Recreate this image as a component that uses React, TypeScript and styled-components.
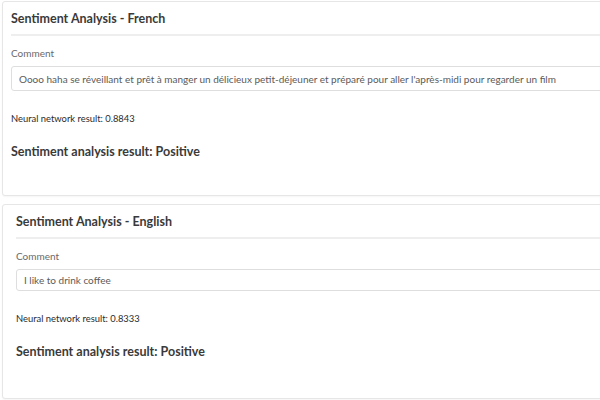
import React from "react";
import styled, { createGlobalStyle } from "styled-components";

const GlobalStyle = createGlobalStyle`
  html, body {
    margin: 0;
    padding: 0;
    background: #ffffff;
    overflow: hidden;
  }
  body {
    font-family: Lato, "Open Sans", "Liberation Sans", sans-serif;
    color: #333333;
  }
`;

type Analysis = {
  language: string;
  comment: string;
  score: string;
  result: string;
  inset: number;
  inputHeight: number;
};

const analyses: Analysis[] = [
  {
    language: "French",
    comment:
      "Oooo haha se réveillant et prêt à manger un délicieux petit-déjeuner et préparé pour aller l'après-midi pour regarder un film",
    score: "0.8843",
    result: "Positive",
    inset: 8,
    inputHeight: 25,
  },
  {
    language: "English",
    comment: "I like to drink coffee",
    score: "0.8333",
    result: "Positive",
    inset: 13,
    inputHeight: 22,
  },
];

function AnalysisCard({ item }: { item: Analysis }) {
  return (
    <StCard>
      <StHeader $inset={item.inset}>
        <StTitle>Sentiment Analysis - {item.language}</StTitle>
      </StHeader>
      <StBody $inset={item.inset}>
        <StLabel>Comment</StLabel>
        <StInput $height={item.inputHeight} defaultValue={item.comment} readOnly />
        <StScore>Neural network result: {item.score}</StScore>
        <StResult>Sentiment analysis result: {item.result}</StResult>
      </StBody>
    </StCard>
  );
}

function App() {
  return (
    <>
      <GlobalStyle />
      <StPage>
        {analyses.map((item) => (
          <AnalysisCard key={item.language} item={item} />
        ))}
      </StPage>
    </>
  );
}

export default App;

const StPage = styled.div`
  display: flex;
  flex-direction: column;
  gap: 8px;
  padding: 1px 0 0 2px;
  width: 600px;
  height: 400px;
  box-sizing: border-box;
  overflow: hidden;
`;

const StCard = styled.div`
  flex: none;
  width: 620px;
  height: 195px;
  box-sizing: border-box;
  border: 1px solid #e6e6e6;
  border-radius: 3px;
  background: #ffffff;
  box-shadow: 0 1px 2px rgba(0, 0, 0, 0.04);
`;

const StHeader = styled.div<{ $inset: number }>`
  margin-left: ${(p) => p.$inset}px;
  height: 32px;
  display: flex;
  align-items: center;
  border-bottom: 2px solid #eeeeee;
`;

const StTitle = styled.h3`
  margin: 0;
  font-size: 12.5px;
  font-weight: 700;
  color: #3a3a3a;
`;

const StBody = styled.div<{ $inset: number }>`
  padding: 10px 0 0 ${(p) => p.$inset}px;
  display: flex;
  flex-direction: column;
`;

const StLabel = styled.label`
  font-size: 10px;
  color: #6a6a6a;
  line-height: 14px;
  margin-bottom: 6px;
`;

const StInput = styled.input<{ $height: number }>`
  box-sizing: border-box;
  height: ${(p) => p.$height}px;
  border: 1px solid #dedede;
  border-radius: 3px;
  padding: 0 7px;
  font-family: Lato, "Open Sans", "Liberation Sans", sans-serif;
  font-size: 10px;
  color: #5a5a5a;
  background: #ffffff;
  outline: none;
`;

const StScore = styled.p`
  margin: 21px 0 0;
  font-size: 9.4px;
  line-height: 14px;
  color: #2a2a2a;
`;

const StResult = styled.p`
  margin: 17px 0 0;
  font-size: 12.5px;
  font-weight: 700;
  line-height: 18px;
  color: #3a3a3a;
`;
